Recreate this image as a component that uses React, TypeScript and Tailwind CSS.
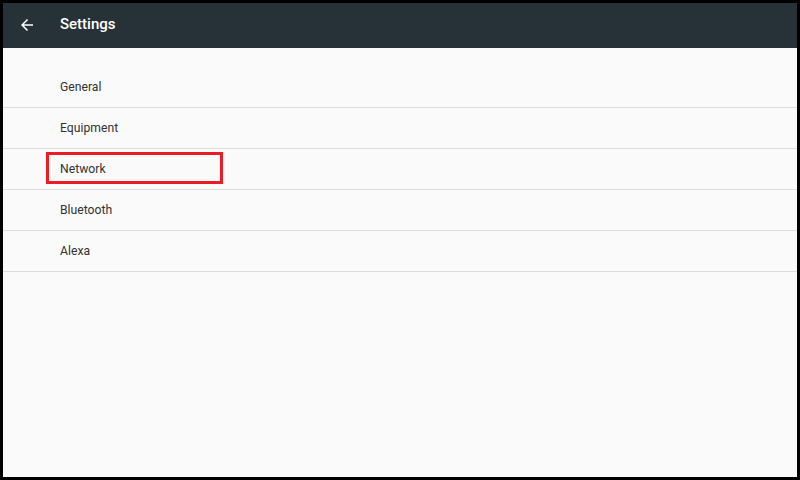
const items = ["General", "Equipment", "Network", "Bluetooth", "Alexa"];

function BackArrow() {
  return (
    <svg width="18" height="18" viewBox="0 0 24 24" fill="#ffffff" aria-hidden="true">
      <path d="M20 11H7.83l5.59-5.59L12 4l-8 8 8 8 1.41-1.41L7.83 13H20v-2z" />
    </svg>
  );
}

export default function App() {
  return (
    <div className="h-[480px] w-[800px] bg-black p-[3px] font-['Roboto','Liberation_Sans',sans-serif]">
      <div className="flex h-full flex-col bg-[#fafafa]">
        <header className="flex h-[45px] shrink-0 items-center bg-[#263238] pb-[2px] text-white">
          <div className="ml-[15px] flex w-[18px] items-center">
            <BackArrow />
          </div>
          <h1 className="ml-[24px] text-[15px] font-medium">Settings</h1>
        </header>
        <ul className="pt-[19px]">
          {items.map((item) => (
            <li
              key={item}
              className="relative flex h-[41px] items-center border-b border-[#dcdcdc] pl-[57px] text-[12.2px] text-[#333333]"
            >
              {item}
              {item === "Network" && (
                <span className="pointer-events-none absolute left-[43px] top-[3px] h-[32px] w-[177px] border-[3px] border-[#ed1c24]" />
              )}
            </li>
          ))}
        </ul>
      </div>
    </div>
  );
}
